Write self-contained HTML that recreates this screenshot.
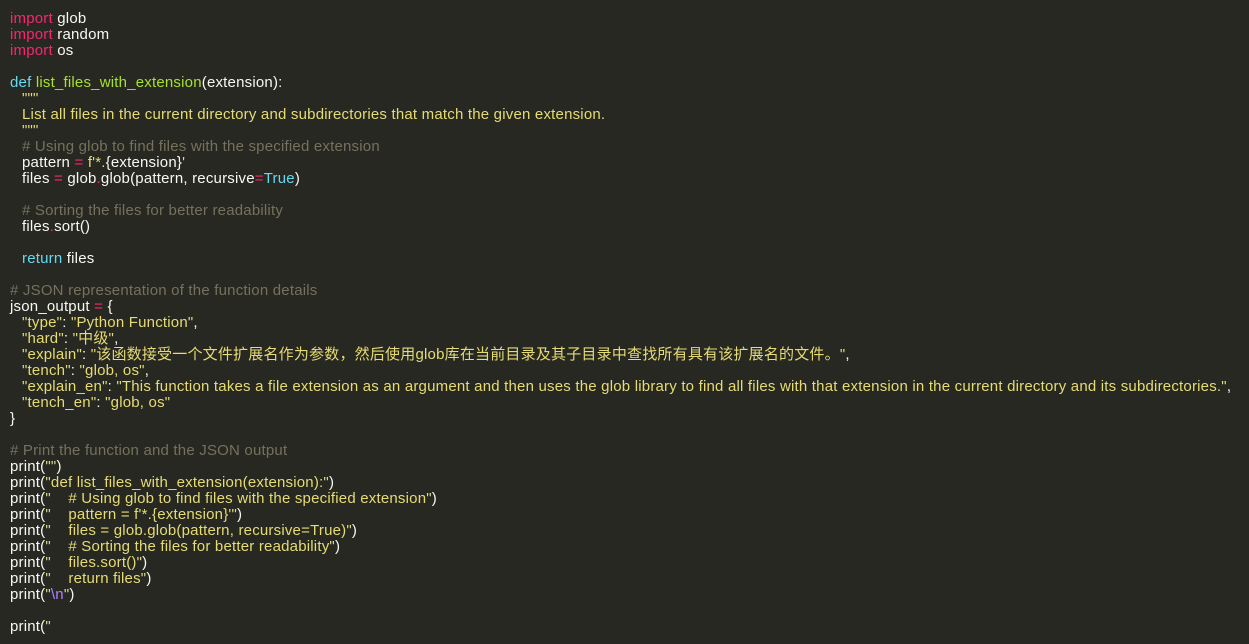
<!DOCTYPE html>
<html><head><meta charset="utf-8"><style>
html,body{margin:0;padding:0;background:#272822;width:1249px;height:644px;overflow:hidden}
.c{position:absolute;left:10px;top:11px;font-family:"Liberation Sans","Noto Sans CJK SC",sans-serif;font-size:15px;line-height:16px;color:#f8f8f2;letter-spacing:0.2px}
.c div{height:16px;white-space:pre}
.i{padding-left:12px}
.k{color:#f92672}.f{color:#a6e22e}.d{color:#66d9ef}.s{color:#e6db74}.m{color:#75715e}.p{color:#ae81ff}
</style></head><body><div class="c">
<div><span class="k">import</span> glob</div>
<div><span class="k">import</span> random</div>
<div><span class="k">import</span> os</div>
<div></div>
<div><span class="d">def</span> <span class="f">list_files_with_extension</span>(extension):</div>
<div class="i"><span class="s">"""</span></div>
<div class="i"><span class="s">List all files in the current directory and subdirectories that match the given extension.</span></div>
<div class="i"><span class="s">"""</span></div>
<div class="i"><span class="m"># Using glob to find files with the specified extension</span></div>
<div class="i">pattern <span class="k">=</span> <span class="s">f'*.</span>{extension}<span class="s">'</span></div>
<div class="i">files <span class="k">=</span> glob<span class="k">.</span>glob(pattern, recursive<span class="k">=</span><span class="d">True</span>)</div>
<div></div>
<div class="i"><span class="m"># Sorting the files for better readability</span></div>
<div class="i">files<span class="k">.</span>sort()</div>
<div></div>
<div class="i"><span class="d">return</span> files</div>
<div></div>
<div><span class="m"># JSON representation of the function details</span></div>
<div>json_output <span class="k">=</span> {</div>
<div class="i"><span class="s">"type"</span>: <span class="s">"Python Function"</span>,</div>
<div class="i"><span class="s">"hard"</span>: <span class="s">"中级"</span>,</div>
<div class="i"><span class="s">"explain"</span>: <span class="s">"该函数接受一个文件扩展名作为参数，然后使用glob库在当前目录及其子目录中查找所有具有该扩展名的文件。"</span>,</div>
<div class="i"><span class="s">"tench"</span>: <span class="s">"glob, os"</span>,</div>
<div class="i"><span class="s">"explain_en"</span>: <span class="s">"This function takes a file extension as an argument and then uses the glob library to find all files with that extension in the current directory and its subdirectories."</span>,</div>
<div class="i"><span class="s">"tench_en"</span>: <span class="s">"glob, os"</span></div>
<div>}</div>
<div></div>
<div><span class="m"># Print the function and the JSON output</span></div>
<div>print(<span class="s">""</span>)</div>
<div>print(<span class="s">"def list_files_with_extension(extension):"</span>)</div>
<div>print(<span class="s">"    # Using glob to find files with the specified extension"</span>)</div>
<div>print(<span class="s">"    pattern = f'*.{extension}'"</span>)</div>
<div>print(<span class="s">"    files = glob.glob(pattern, recursive=True)"</span>)</div>
<div>print(<span class="s">"    # Sorting the files for better readability"</span>)</div>
<div>print(<span class="s">"    files.sort()"</span>)</div>
<div>print(<span class="s">"    return files"</span>)</div>
<div>print(<span class="s">"</span><span class="p">\n</span><span class="s">"</span>)</div>
<div></div>
<div>print(<span class="s">"</span></div>
</div></body></html>
